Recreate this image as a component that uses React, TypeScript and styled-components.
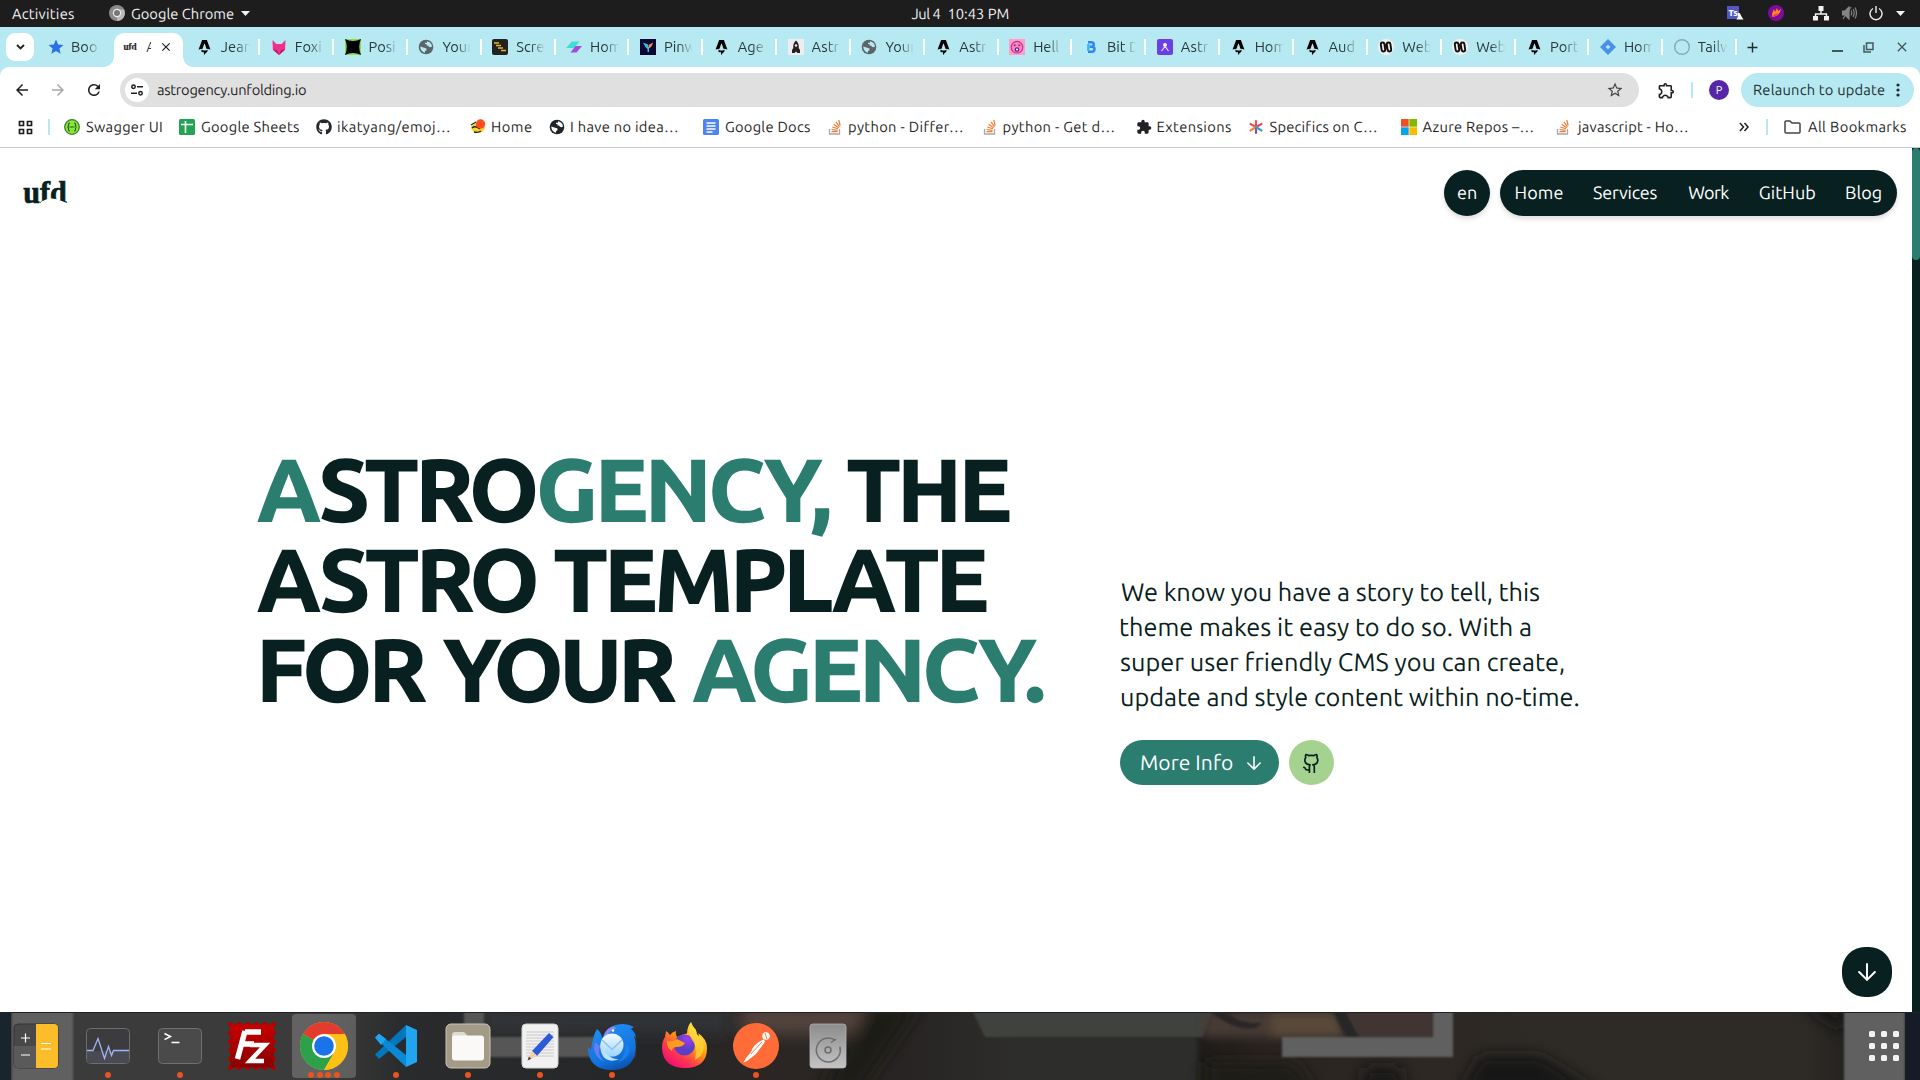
import React, { useLayoutEffect, useRef, useState } from 'react';
import styled, { createGlobalStyle, css } from 'styled-components';
import { MdExtension, MdOutlineExtension, MdStar, MdStarBorder, MdArrowBack, MdArrowForward, MdRefresh, MdClose, MdAdd } from 'react-icons/md';
import { FaGithub } from 'react-icons/fa';
import { SiAstro } from 'react-icons/si';

const ink = '#082120';
const green = '#2a7d6f';
const aqua = '#b6e9f1';

const Global = createGlobalStyle`
  * { box-sizing: border-box; }
  body { margin: 0; background: #fff; overflow: hidden; }
  body, button { font-family: Ubuntu, "Noto Sans", "Open Sans", sans-serif; font-weight: 450; }
  svg { display: block; flex: none; }
`;

/* ---------- text with an exact visible width ---------- */
const FitBox = styled.span`
  display: inline-block;
  flex: none;
  white-space: pre;
  text-rendering: geometricPrecision;
`;

function Fit({ w, children }: { w: number; children: string }) {
  const ref = useRef<HTMLSpanElement>(null);
  const [fit, setFit] = useState({ spacing: 0, indent: 0 });
  useLayoutEffect(() => {
    const el = ref.current;
    const ctx = document.createElement('canvas').getContext('2d');
    if (!el || !ctx) return;
    const cs = getComputedStyle(el);
    ctx.font = `${cs.fontWeight} ${cs.fontSize} ${cs.fontFamily}`;
    const m = ctx.measureText(children);
    const visible = m.actualBoundingBoxLeft + m.actualBoundingBoxRight;
    setFit({
      spacing: children.length > 1 ? (w - visible) / (children.length - 1) : 0,
      indent: m.actualBoundingBoxLeft,
    });
  }, [w, children]);
  return (
    <FitBox ref={ref} style={{ width: w, letterSpacing: fit.spacing, textIndent: fit.indent }}>
      {children}
    </FitBox>
  );
}

/* ---------- layout ---------- */
const Screen = styled.div`
  width: 1920px;
  height: 1080px;
  display: flex;
  flex-direction: column;
  overflow: hidden;
  background: #fff;
`;

const TopBar = styled.header`
  height: 27px;
  flex: none;
  background: #1d1d1d;
  color: #f2f2f2;
  font-size: 14.67px;
  display: grid;
  grid-template-columns: 1fr auto 1fr;
  align-items: center;
  line-height: 25px;
  padding: 0 15px 1px 12px;
`;
const TopGroup = styled.div<{ $end?: boolean }>`
  display: flex;
  align-items: center;
  justify-content: ${p => (p.$end ? 'flex-end' : 'flex-start')};
`;
const Gap = styled.span<{ $w: number }>`
  width: ${p => p.$w}px;
  flex: none;
`;
const Clock = styled.div`
  display: flex;
  gap: 8px;
  padding-left: 3px;
`;

const TabStrip = styled.nav`
  height: 40px;
  flex: none;
  background: ${aqua};
  display: flex;
  align-items: center;
  padding-left: 6px;
  color: #26383b;
  font-size: 14.67px;
`;
const SearchTabs = styled.button`
  width: 28px;
  height: 28px;
  border: 0;
  padding: 0;
  border-radius: 9px;
  background: #fff;
  display: grid;
  place-items: center;
  margin: 0 3px 0 0;
`;
const Tab = styled.div<{ $line?: boolean }>`
  width: 73.85px;
  height: 40px;
  flex: none;
  display: flex;
  align-items: center;
  gap: 8px;
  padding-left: 10px;
  background: ${p => (p.$line ? 'linear-gradient(#fff,#fff) right 0.500px top 12px / 2px 16px no-repeat' : 'none')};
`;
const TabIcon = styled.span`
  width: 16px;
  flex: none;
  display: grid;
  place-items: center;
`;
const TabTitle = styled.span`
  width: 29px;
  overflow: hidden;
  white-space: nowrap;
  line-height: 20px;
  -webkit-mask-image: linear-gradient(to right, #000 50%, transparent 100%);
  mask-image: linear-gradient(to right, #000 50%, transparent 100%);
`;
const ActiveTab = styled.div`
  width: 69px;
  height: 34px;
  margin: 6px 4px 0 3px;
  flex: none;
  align-self: flex-end;
  background: #fff;
  border-radius: 10px 10px 0 0;
  display: flex;
  align-items: center;
  padding: 0 10px 6px 9px;
  justify-content: space-between;
  position: relative;
  &::before, &::after {
    content: '';
    position: absolute;
    bottom: 0;
    width: 10px;
    height: 10px;
  }
  &::before { left: -10px; background: radial-gradient(circle at 0 0, transparent 9.5px, #fff 10px); }
  &::after { right: -10px; background: radial-gradient(circle at 100% 0, transparent 9.5px, #fff 10px); }
`;
const ActiveTitle = styled.span`
  width: 5px;
  margin-left: 2px;
  overflow: hidden;
  font-size: 14px;
  line-height: 20px;
  color: #333;
`;
const WindowButtons = styled.div`
  margin-left: auto;
  display: flex;
  align-items: center;
  gap: 20px;
  padding-right: 10px;
`;

const ToolbarBack = styled.div`
  flex: none;
  background: ${aqua};
`;
const Toolbar = styled.div`
  height: 46px;
  background: #fff;
  border-radius: 9px 9px 0 0;
  display: flex;
  align-items: center;
  padding: 0 6px 0 13px;
  font-size: 14.67px;
  line-height: 20px;
  color: #1f1f1f;
`;
const NavIcons = styled.div`
  display: flex;
  gap: 18px;
  width: 107px;
`;
const Omnibox = styled.div`
  width: 1519px;
  height: 34px;
  border-radius: 17px;
  background: #e0e0e0;
  display: flex;
  align-items: center;
  padding: 0 15px 0 5px;
`;
const SiteButton = styled.span`
  width: 24px;
  height: 24px;
  border-radius: 50%;
  background: #fff;
  display: grid;
  place-items: center;
  margin-right: 8px;
`;
const Divider = styled.span<{ $m: string }>`
  width: 2px;
  height: 16px;
  flex: none;
  background: ${aqua};
  margin: ${p => p.$m};
`;
const Avatar = styled.span`
  width: 20px;
  height: 20px;
  border-radius: 50%;
  background: #5427a8;
  color: #fff;
  font-size: 11px;
  line-height: 20px;
  text-align: center;
`;
const Relaunch = styled.button`
  width: 173px;
  height: 34px;
  margin-left: 12px;
  border: 0;
  border-radius: 17px;
  background: ${aqua};
  color: #1f2d30;
  font-size: 14.67px;
  line-height: 20px;
  padding: 0 0 0 13px;
  display: flex;
  align-items: center;
  gap: 11px;
`;

const Bookmarks = styled.div`
  height: 35px;
  flex: none;
  border-bottom: 1px solid #c9c9c9;
  display: flex;
  align-items: center;
  padding: 0 14px 6px 18px;
  font-size: 14.67px;
  line-height: 20px;
  color: #1f1f1f;
`;
const Bookmark = styled.div<{ $w: number }>`
  width: ${p => p.$w + 39}px;
  flex: none;
  display: flex;
  align-items: center;
  gap: 6px;
`;

const Page = styled.main`
  height: 864px;
  flex: none;
  display: flex;
  color: ${ink};
`;
const PageBody = styled.div`
  width: 1912px;
  display: flex;
  flex-direction: column;
`;
const ScrollTrack = styled.div`
  width: 8px;
  background: ${ink};
`;
const ScrollThumb = styled.div`
  height: 112px;
  border-radius: 4px;
  background: ${green};
`;
const SiteHeader = styled.header`
  display: flex;
  align-items: center;
  padding: 22px 15px 0 22px;
  font-size: 18px;
  line-height: 46px;
`;
const pill = css`
  height: 46px;
  border-radius: 23px;
  background: ${ink};
  color: #fff;
  box-shadow: 0 3px 5px rgba(40, 10, 30, 0.14);
`;
const Lang = styled.button`
  ${pill}
  width: 46px;
  border: 0;
  padding: 0 1px 1px 0;
  margin: 0 10px 0 auto;
  font-size: 18px;
`;
const Menu = styled.nav`
  ${pill}
  width: 397px;
  display: flex;
  gap: 30.6px;
  padding-left: 15.5px;
`;
const Hero = styled.section`
  display: grid;
  grid-template-columns: 864px 1fr;
  padding: 229px 0 0 256px;
`;
const Title = styled.h1`
  margin: 0;
  font-size: 90px;
  font-weight: 800;
  line-height: 90px;
`;
const TitleLine = styled.div`
  height: 90px;
  display: flex;
`;
const Word = styled.span<{ $green?: boolean; $ml?: number }>`
  color: ${p => (p.$green ? green : ink)};
  margin-left: ${p => p.$ml ?? 0}px;
  display: flex;
`;
const Side = styled.div`
  padding-top: 129px;
`;
const Lead = styled.p`
  margin: 0 0 26px 1px;
  display: flex;
  flex-direction: column;
  font-size: 25.3px;
  line-height: 35px;
`;
const Actions = styled.div`
  display: flex;
  gap: 10px;
`;
const MoreInfo = styled.a`
  width: 159px;
  height: 45px;
  border-radius: 23px;
  background: ${green};
  color: #fff;
  display: flex;
  align-items: center;
  gap: 14px;
  padding-left: 21px;
  font-size: 21px;
  line-height: 43px;
`;
const RoundLink = styled.a`
  width: 45px;
  height: 45px;
  border-radius: 50%;
  background: #a5d28f;
  display: grid;
  place-items: center;
`;
const ScrollDown = styled.button`
  width: 50px;
  height: 50px;
  border: 0;
  padding: 0;
  border-radius: 23px;
  background: ${ink};
  display: grid;
  place-items: center;
  margin: auto 20px 15px auto;
`;

const Dock = styled.footer`
  height: 68px;
  flex: none;
  position: relative;
  background: #2b2a28;
  display: flex;
  overflow: hidden;
`;
const Wallpaper = styled.svg`
  position: absolute;
  inset: 0;
`;
const DockItems = styled.div`
  position: relative;
  display: flex;
  flex: 1;
  padding: 2px 9px 2px 4px;
`;
const DockItem = styled.div<{ $active?: boolean }>`
  width: 64px;
  height: 64px;
  margin-right: 8px;
  border-radius: 4px;
  background: ${p => (p.$active ? 'rgba(255,255,255,0.2)' : 'transparent')};
  display: flex;
  flex-direction: column;
  align-items: center;
  padding-top: 8px;
`;
const Dots = styled.div`
  display: flex;
  gap: 2.7px;
  margin-top: 2px;
`;
const Dot = styled.span`
  width: 6px;
  height: 6px;
  border-radius: 50%;
  background: #e95420;
`;
const AppGrid = styled.div`
  margin: 17px 12px 0 auto;
  display: grid;
  grid-template-columns: repeat(3, 6px);
  grid-auto-rows: 6px;
  gap: 6px;
`;
const Cell = styled.span`
  background: #f3f3f3;
  border-radius: 1.5px;
`;

/* ---------- small drawings ---------- */
const Caret = () => <svg width="9" height="5" viewBox="0 0 9 5"><path d="M0 0h9L4.500 5z" fill="#f2f2f2" /></svg>;

const ChromeMono = () => (
  <svg width="16" height="16" viewBox="0 0 16 16">
    <circle cx="8" cy="8" r="8" fill="#8b8b8b" />
    <path d="M8 16A8 8 0 0 0 15 4.500H8z" fill="#b9b9b9" />
    <circle cx="8" cy="8" r="3.600" fill="#777" stroke="#eee" strokeWidth="1.200" />
  </svg>
);

const Logo = ({ w, h, fill = ink }: { w: number; h: number; fill?: string }) => (
  <svg width={w} height={h} viewBox="0 0 46 26">
    <text x="1.300" y="22.500" fontFamily="Liberation Serif, serif" fontWeight="700" fontSize="31" fill={fill} stroke={fill} strokeWidth="0.700" textLength="43.500" lengthAdjust="spacingAndGlyphs">ufd</text>
    <path d="M18 25L19.500 21.500Q27 17 34 19Q40 21 45 23V26H17z" fill="#fff" />
  </svg>
);

const Doc = ({ c, kind }: { c: string; kind: string }) => (
  <svg width="16" height="16" viewBox="0 0 16 16">
    <rect width="16" height="16" rx="1.500" fill={c} />
    {kind === 'sheet'
      ? <path d="M2 5.500h12M6.500 2v12" stroke="#fff" strokeWidth="1.600" />
      : <path d="M3.500 4h9M3.500 7h9M3.500 10h9M3.500 13h6" stroke="#fff" strokeWidth="1.500" />}
  </svg>
);

const Stack = () => (
  <svg width="16" height="16" viewBox="0 0 16 16" fill="none">
    <path d="M2.500 10v5h10v-5" stroke="#a5a7aa" strokeWidth="1.300" />
    <path d="M4.500 12.700h6M4.600 10.500l6 .8M5.300 8l5.700 1.800M6.600 5.300l5 3.400M9 2.800l3.400 4.800M11.800 1l1.400 5.600" stroke="#f07a35" strokeWidth="1.200" />
  </svg>
);

const Swagger = () => (
  <svg width="16" height="16" viewBox="0 0 16 16" fill="none">
    <circle cx="8" cy="8" r="7.300" fill="#85ea2d" stroke="#3b7a3e" strokeWidth="1.300" />
    <path d="M6 4q-1.500 0-1.500 1.500v1Q4.500 8 3.300 8q1.200 0 1.200 1.500v1Q4.500 12 6 12M10 4q1.500 0 1.500 1.500v1Q11.500 8 12.700 8q-1.200 0-1.200 1.500v1Q11.500 12 10 12M5.500 8h5" stroke="#24533c" strokeWidth="1.100" />
  </svg>
);

const Face = () => (
  <svg width="16" height="16" viewBox="0 0 16 16" fill="none">
    <path d="M1 8a7 6 0 0 0 14 0l-5-5-6 2z" fill="#f5d327" />
    <path d="M1 6l5-3M2 9q3-3 8 1M4 13q4 1 7-1" stroke="#222" strokeWidth="1.300" />
    <circle cx="10.500" cy="5" r="4.700" fill="#ff4b1f" />
  </svg>
);

const Asterisk = () => (
  <svg width="16" height="16" viewBox="0 0 16 16" strokeWidth="2.200" strokeLinecap="round">
    <path d="M8 8V2M8 8L2.500 5" stroke="#f0534f" /><path d="M8 8L2.500 11.500" stroke="#f58a3c" />
    <path d="M8 8v6" stroke="#7b4fc0" /><path d="M8 8l5.500-3" stroke="#e2486c" /><path d="M8 8l5.500 3.500" stroke="#38a6b8" />
  </svg>
);

const Microsoft = () => (
  <svg width="16" height="16" viewBox="0 0 16 16">
    <path d="M0 0h7.700v7.700H0z" fill="#f25022" /><path d="M8.300 0H16v7.700H8.300z" fill="#7fba00" />
    <path d="M0 8.300h7.700V16H0z" fill="#00a4ef" /><path d="M8.300 8.300H16V16H8.300z" fill="#ffb900" />
  </svg>
);

const World = ({ c, land }: { c: string; land: string }) => (
  <svg width="16" height="16" viewBox="0 0 16 16">
    <circle cx="8" cy="8" r="7.300" fill={c} />
    <path d="M9 2.200q4.500 1 5 5.300-1.500 1.300-3 .3L10 6.500H8.500V5H7V3.800h2z" fill={land} />
    <path d="M2.200 7.500l4 1.200 2.300.8v1.600L7 12.200v1.600Q2.500 12.500 2.200 7.500z" fill={land} />
  </svg>
);

const Fox = () => <svg width="16" height="16" viewBox="0 0 16 16"><path d="M1.500 1l3.800 4h5.400l3.800-4-.4 10L8 16l-6.100-5z" fill="#f0318b" /><path d="M2 10l4 1.500L8 16zM14 10l-4 1.500L8 16z" fill="#b5125f" /></svg>;
const Posi = () => <svg width="16" height="16" viewBox="0 0 16 16"><rect width="16" height="16" fill="#8be04e" /><path d="M0 0q8 4 16 0-3.500 8 0 16-8-4-16 0 3.500-8 0-16z" fill="#000" /></svg>;
const Scre = () => <svg width="16" height="16" viewBox="0 0 16 16"><rect width="16" height="16" rx="2" fill="#222" /><path d="M2 4h5M4 6.500h5M6 9h5M9 11.500h5" stroke="#e5b62c" strokeWidth="1.500" /></svg>;
const Slash = () => <svg width="16" height="16" viewBox="0 0 16 16"><path d="M6 2.500h7.500l-5.500 6.500H0z" fill="#3ce0cf" /><path d="M9.500 7H16l-5.500 6.500H4.500z" fill="#a24be0" /></svg>;
const Pinw = () => <svg width="16" height="16" viewBox="0 0 16 16"><rect width="16" height="16" fill="#0b0733" /><path d="M3 3.500l5 2v5q-3-2-5-7z" fill="#2ec4d6" /><path d="M13 3.500q-1 5-4.500 6V6z" fill="#f08a4b" /><path d="M8.300 8v5" stroke="#48b8e0" strokeWidth="1.500" /></svg>;
const Rocket = () => <svg width="16" height="16" viewBox="0 0 16 16"><rect width="16" height="16" fill="#eee" /><path d="M8 1.500q3.200 2.500 2.700 7.500l1.300 2v3H9.500L8 12.500 6.500 14H4v-3l1.300-2Q4.800 4 8 1.500z" fill="#222" /><circle cx="8" cy="6.500" r="1.200" fill="#eee" /></svg>;
const Pink = () => <svg width="16" height="16" viewBox="0 0 16 16" fill="none"><rect width="16" height="16" fill="#ff9dcc" /><circle cx="8" cy="8.200" r="5.800" fill="#fb86c0" stroke="#c2348f" strokeWidth="1.200" /><circle cx="5.700" cy="6.300" r="1" fill="#a3207c" /><circle cx="10.300" cy="6.300" r="1" fill="#a3207c" /><circle cx="8" cy="10.500" r="1.700" fill="#fff" stroke="#6c1aa0" strokeWidth="1.300" /></svg>;
const Bit = () => <svg width="16" height="16" viewBox="0 0 16 16" fill="none"><path d="M5 3.200H8.500a2.200 2.200 0 0 1 0 4.500H6.500M5 12.800h4a2.500 2.500 0 0 0 0-5" stroke="#2f86f6" strokeWidth="2.500" /><path d="M5.300 5v7" stroke="#34b7ff" strokeWidth="2.400" /></svg>;
const Purple = () => <svg width="16" height="16" viewBox="0 0 16 16" fill="none"><rect width="16" height="16" rx="2" fill="#6a3fe6" /><circle cx="8" cy="6" r="1.900" fill="#fff" /><path d="M4.500 12l2.700-3.500h1.600L11.500 12" stroke="#e8e2ff" strokeWidth="1.200" /></svg>;
const Web = () => <svg width="16" height="16" viewBox="0 0 16 16" fill="none"><circle cx="8" cy="8" r="8" fill="#f5f0ee" /><rect x="3.200" y="3.500" width="3.600" height="9" rx="1.800" stroke="#111" strokeWidth="1.900" transform="rotate(-8 5 8)" /><rect x="9.200" y="3.500" width="3.600" height="9" rx="1.800" stroke="#111" strokeWidth="1.900" transform="rotate(-8 11 8)" /><path d="M6.500 4.500l3.500 7" stroke="#111" strokeWidth="1.500" /></svg>;
const Diamond = () => <svg width="16" height="16" viewBox="0 0 16 16"><path d="M8 0l4 4-4 4-4-4zM8 8l4 4-4 4-4-4zM0 8l4-4 4 4-4 4zM8 8l4-4 4 4-4 4z" fill="#4a90e8" /><path d="M8 5.700L10.300 8 8 10.300 5.700 8z" fill="#bfe6f8" /></svg>;
const Ring = () => <svg width="16" height="16" viewBox="0 0 16 16" fill="none"><circle cx="8" cy="8" r="7.300" stroke="#8aa9b2" strokeWidth="1.400" /></svg>;
const Astro = () => <SiAstro size={15} color="#000" />;
const Globe = () => <World c="#5c6468" land={aqua} />;

const tabs: [string, () => React.ReactElement][] = [
  ['Foxi', Fox], ['Posi', Posi], ['Your', Globe], ['Scre', Scre], ['Hom', Slash], ['Pinw', Pinw], ['Age', Astro],
  ['Astr', Rocket], ['Your', Globe], ['Astr', Astro], ['Hell', Pink], ['Bit D', Bit], ['Astr', Purple], ['Hom', Astro],
  ['Aud', Astro], ['Web', Web], ['Web', Web], ['Port', Astro], ['Hom', Diamond], ['Tailw', Ring],
];

const bookmarks: { icon: React.ReactElement; label: string; text: number; w: number }[] = [
  { icon: <Swagger />, label: 'Swagger UI', text: 76, w: 76 },
  { icon: <Doc c="#23a455" kind="sheet" />, label: 'Google Sheets', text: 98, w: 98 },
  { icon: <FaGithub size={16} color="#24292f" />, label: 'ikatyang/emoj…', text: 112, w: 115 },
  { icon: <Face />, label: 'Home', text: 40, w: 40 },
  { icon: <World c="#1f2328" land="#fff" />, label: 'I have no idea…', text: 107, w: 115 },
  { icon: <Doc c="#4c84f0" kind="doc" />, label: 'Google Docs', text: 85, w: 85 },
  { icon: <Stack />, label: 'python - Differ…', text: 114, w: 115.5 },
  { icon: <Stack />, label: 'python - Get d…', text: 111, w: 115 },
  { icon: <MdExtension size={16} color="#202124" />, label: 'Extensions', text: 73.5, w: 73 },
  { icon: <Asterisk />, label: 'Specifics on C…', text: 107, w: 114 },
  { icon: <Microsoft />, label: 'Azure Repos –…', text: 111, w: 115.5 },
  { icon: <Stack />, label: 'javascript - Ho…', text: 111, w: 114 },
];

const ArrowDown = ({ s, sw }: { s: number; sw: number }) => (
  <svg width={s} height={s} viewBox="0 0 16 16" fill="none" stroke="#fff" strokeWidth={sw} strokeLinecap="round" strokeLinejoin="round">
    <path d="M8 1v14M1 8l7 7 7-7" />
  </svg>
);

const Cat = () => (
  <svg width="18" height="20" viewBox="2 0 18 20" fill="none" stroke={ink} strokeWidth="1.700" strokeLinecap="round" strokeLinejoin="round">
    <path d="M7.600 19v-5.500q0-1.300.7-2Q3 11.200 3 6.800q0-1.300.9-2.400-.5-1.700.2-3.200 1.500 0 2.900 1.200 2.500-.6 5 0Q13.400 1.200 14.900 1.200q.7 1.500.2 3.200.9 1.100.9 2.400 0 4.400-5 4.700" transform="translate(.8 .3)" />
    <path d="M13.300 19.300v-5.500q0-1.300-.8-2M8.300 16.800Q5.300 17.500 4.500 15.800 3.900 14.300 2.800 14.300" />
  </svg>
);

/* ---------- dock icons, 48px squares ---------- */
const I = ({ children }: { children: React.ReactNode }) => <svg width="48" height="48" viewBox="0 0 48 48" fill="none">{children}</svg>;

const Calculator = () => (
  <I><rect x="2" y="2" width="44" height="44" rx="4" fill="#484848" stroke="#343434" /><path d="M2 24h22v22H6q-4 0-4-4z" fill="#5a5a5a" />
    <path d="M24 2h18q4 0 4 4v36q0 4-4 4H24z" fill="#fcbd2b" />
    <path d="M9 16h9M13.500 11.500v9M9 33h9M29 21.500h10M29 27h10" stroke="#fff" strokeWidth="1.200" /></I>
);
const Monitor = () => (
  <I><rect x="2.500" y="6.500" width="43" height="35" rx="4" fill="#3c3c3e" stroke="#6d6d6d" /><path d="M3 29h42v9q0 3-3 3H6q-3 0-3-3z" fill="#494b54" />
    <path d="M3 28.500h6l5-12 6.500 20 4-12 3 9 2-5H45" stroke="#a3b4f4" strokeWidth="1.300" /></I>
);
const Terminal = () => (
  <I><rect x="2.500" y="6.500" width="43" height="35" rx="4" fill="#4a4a4a" stroke="#707070" />
    <path d="M8.500 11.500l6 3-6 3.200M15.500 20.500h8" stroke="#fff" strokeWidth="1.500" /></I>
);
const Filezilla = () => (
  <I><defs><linearGradient id="fz" x2="0" y2="1"><stop stopColor="#c80000" /><stop offset="1" stopColor="#8a0000" /></linearGradient></defs>
    <rect x="2.500" y="2.500" width="43" height="43" stroke="#b00000" strokeWidth="5" strokeDasharray="0 8.600" strokeLinecap="round" />
    <rect x="2.500" y="2.500" width="43" height="43" fill="url(#fz)" />
    <path d="M17 10h16M17 9L9.500 37M15 22h11" stroke="#fff" strokeWidth="5.500" />
    <path d="M22 23h15L22 39h14" stroke="#fff" strokeWidth="4.500" /></I>
);
const Chrome = () => (
  <I><circle cx="24" cy="24" r="24" fill="#fbbc04" />
    <path d="M24 24L3.220 12A24 24 0 0 1 44.780 12z" fill="#e33b2e" />
    <path d="M24 24L3.220 12A24 24 0 0 0 24 48l10.400-18z" fill="#2da04a" />
    <path d="M24 12h20.780A24 24 0 0 1 24 48l10.400-18z" fill="#fdc014" />
    <circle cx="24" cy="24" r="12" fill="#fff" /><circle cx="24" cy="24" r="9.800" fill="#1a73e8" /></I>
);
const Code = () => (
  <I><path d="M34 3v12L7 37l-4-4.500z" fill="#0277bd" /><path d="M3 15.500l4-3.800L34 33v12z" fill="#0a8ad6" />
    <path d="M3 15.500l4-3.800L14 17l-5 6zM34 3l11 5v32l-11 5z" fill="#22a5f1" /></I>
);
const Files = () => (
  <I><rect x="2" y="2" width="44" height="44" rx="5" fill="#a39b88" stroke="#cbc4b3" /><path d="M8 13q0-3 3-3h9l4 4v5H8z" fill="#dedad0" />
    <rect x="8" y="13.500" width="32" height="25" rx="3" fill="#faf9f7" /></I>
);
const Editor = () => (
  <I><rect x="6" y="2" width="36" height="44" rx="4" fill="#f1f1f1" stroke="#cfcfcf" />
    <path d="M10 10h28M10 13h28M10 16h28M10 19h28M10 22h28M10 25h28M10 28h28M10 31h28M10 34h28" stroke="#c6c6c6" strokeWidth=".9" />
    <path d="M16 29L33 11l4.500 4L21 34z" fill="#2b5bd8" /><path d="M16 29l5 5-9.500 4.500z" fill="#f6cfa3" /><path d="M13 34.500l2.300 2.300-3.800 1.700z" fill="#444" /></I>
);
const Thunderbird = () => (
  <I><defs>
    <linearGradient id="tb" x1=".3" x2=".7" y2="1"><stop stopColor="#1f8ef5" /><stop offset=".7" stopColor="#1273de" /><stop offset="1" stopColor="#0b4fa8" /></linearGradient>
    <linearGradient id="tm" x2="0" y2="1"><stop stopColor="#f4faff" /><stop offset="1" stopColor="#9bd4fb" /></linearGradient></defs>
    <path d="M9 7q5 4 5 10Q18 4 30 2.500q9-1.500 16 2.500l-3 2q4 3 5 8l-2-1q3 9 1 17-3 17-23 17Q0 48 0 25l3 3Q5 13 9 7z" fill="url(#tb)" />
    <path d="M15.500 14q3-9 11-9.500l1.500 2q-6 2-9 7z" fill="#8b8cf4" />
    <path d="M7 20q-4 12 8 19-6-7-3-15z" fill="#6a7cf0" />
    <circle cx="24" cy="23" r="11.500" fill="url(#tm)" />
    <path d="M12 21.500q6 15 19 16-10 3-15-2-4-5-4-14z" fill="#b9e2fd" />
    <path d="M14 18l10 9.500L34 18" stroke="#8fbfe8" strokeWidth="1.500" strokeLinejoin="round" />
    <path d="M37 22q2 11-7 18 13-4 11-16z" fill="#1a7fea" />
    <circle cx="25" cy="8.500" r="1.200" fill="#fff" /></I>
);
const Firefox = () => (
  <I><defs>
    <linearGradient id="ff" x1=".85" y1=".1" x2=".2" y2="1"><stop stopColor="#fff44f" /><stop offset=".4" stopColor="#ff980e" /><stop offset=".7" stopColor="#ff3750" /><stop offset="1" stopColor="#eb0878" /></linearGradient>
    <radialGradient id="fp" cx=".65" cy=".2"><stop stopColor="#a03cf0" /><stop offset="1" stopColor="#5a3fc4" /></radialGradient></defs>
    <path d="M6 9q2 1 4 4 2-3 6-4-1 3 1 6 6-3 10-3.500Q27 5 31 0q1 4 5 8v3l3 4q0-2-1-4 9 6 9 15 0 20-22 20T2 26q0-7 3-11z" fill="url(#ff)" />
    <circle cx="24.500" cy="23" r="10.500" fill="url(#fp)" />
    <path d="M7 19q6 1 10-2 4 2 8 4-2 4-8 4-5 0-5 4-6-4-5-10z" fill="#ff9a1e" />
    <path d="M31 1q3 5 6 9v2q9 8 6 18-3 6-8 8 2-10-1-17-5-7-5-11z" fill="#ffd83a" opacity=".75" /></I>
);
const Postman = () => (
  <I><circle cx="24" cy="24" r="23" fill="#ff6c37" /><circle cx="34" cy="14" r="3.800" fill="#fff" />
    <path d="M31.500 17.500q2 1 1 3L24 32l-9 7-3.500 1.500L14 36l5-6q2-8 12.500-12.500z" fill="#fff" />
    <path d="M30 20L19 32M33 11l2 6" stroke="#ff6c37" strokeWidth=".9" /></I>
);
const Disk = () => (
  <I><defs><linearGradient id="dk" x2="0" y2="1"><stop stopColor="#8c8c8c" /><stop offset="1" stopColor="#c4c4c4" /></linearGradient></defs>
    <rect x="6" y="2" width="36" height="44" rx="3" fill="url(#dk)" stroke="#b4b4b4" strokeWidth=".8" />
    <path d="M31.500 18.300A12 12 0 1 0 36 25M27 20.500l5-3.500M36 24.500v4" stroke="#6e6e6e" strokeWidth="1.500" /><circle cx="24" cy="28" r="3" stroke="#6e6e6e" strokeWidth="1.600" /></I>
);

const dock: [() => React.ReactElement, number][] = [
  [Calculator, 0], [Monitor, 1], [Terminal, 1], [Filezilla, 0], [Chrome, 4], [Code, 1],
  [Files, 1], [Editor, 1], [Thunderbird, 1], [Firefox, 0], [Postman, 1], [Disk, 0],
];

const Backdrop = () => (
  <Wallpaper width="1920" height="68" viewBox="0 0 1920 68" preserveAspectRatio="none">
    <defs>
      <linearGradient id="wall">
        <stop offset="0" stopColor="#3b3b3b" /><stop offset=".17" stopColor="#3b3b3b" /><stop offset=".21" stopColor="#2a2b2c" />
        <stop offset=".34" stopColor="#252627" /><stop offset=".4" stopColor="#2b2624" /><stop offset=".47" stopColor="#272423" /><stop offset=".53" stopColor="#2d2d2b" />
        <stop offset=".622" stopColor="#2d2d2b" /><stop offset=".626" stopColor="#1f1c1a" /><stop offset=".66" stopColor="#2a2421" /><stop offset=".8" stopColor="#2e2a26" /><stop offset=".94" stopColor="#2e2b26" />
        <stop offset=".962" stopColor="#242220" />
      </linearGradient>
      <filter id="soft" x="-30%" y="-60%" width="160%" height="220%"><feGaussianBlur stdDeviation="8" /></filter>
      <filter id="mid" x="-30%" y="-60%" width="160%" height="220%"><feGaussianBlur stdDeviation="4" /></filter>
      <filter id="edge" x="-10%" y="-20%" width="120%" height="140%"><feGaussianBlur stdDeviation="1.200" /></filter>
    </defs>
    <rect width="1920" height="68" fill="url(#wall)" />
    <rect x="480" y="-4" width="250" height="24" fill="#333537" filter="url(#soft)" />
    <g filter="url(#soft)">
      <path d="M740 -6h150l-20 28H740z" fill="#54453e" />
      <path d="M920 -8L860 80h-40L870 -8z" fill="#1f1a18" />
      <path d="M1205 50h90l20 30h-110z" fill="#1d1a18" />
      <path d="M1365 56h35l5 26h-45z" fill="#181818" />
      <path d="M1480 44h60l60 36h-140z" fill="#191918" />
      <path d="M1800 -10h44v30z" fill="#151413" />
    </g>
    <path d="M973 0h240l-10 25H985z" fill="#40423c" filter="url(#edge)" />
    <path d="M1207 0h130l10 25h-145z" fill="#463b34" filter="url(#mid)" />
    <path d="M1270 2h64l8 21h-70z" fill="#584839" filter="url(#mid)" />
    <path d="M1212 0h14q16 14 36 10l-6 6q-22 4-44-16z" fill="#2a2726" filter="url(#edge)" />
    <path d="M1345 0h88v25h-75z" fill="#3f3632" filter="url(#edge)" />
    <path d="M1334 0h11q4 14 14 25h-11q-8-8-14-25z" fill="#262727" filter="url(#edge)" />
    <g filter="url(#edge)" fill="#606060">
      <path d="M12 -4h61v76H12z" />
      <path d="M464 -4h20v29h151v20H464z" fill="#565657" />
      <path d="M1433 -4h20v49h-171V25h151z" />
      <path d="M1844 -4h61v76h-61z" />
    </g>
    <rect width="11" height="68" fill="#1a242c" />
    <rect x="1905" width="15" height="68" fill="#151b27" />
    <rect width="1920" height="1" fill="#202225" />
  </Wallpaper>
);

export default function App() {
  return (
    <Screen>
      <Global />
      <TopBar>
        <TopGroup>
          <Fit w={62}>Activities</Fit><Gap $w={35} /><ChromeMono /><Gap $w={6} />
          <Fit w={103}>Google Chrome</Fit><Gap $w={7} /><Caret />
        </TopGroup>
        <Clock><Fit w={29}>Jul 4</Fit><Fit w={60}>10:43 PM</Fit></Clock>
        <TopGroup $end>
          <svg width="17" height="17" viewBox="0 0 17 17"><rect y="1" width="12" height="13" fill="#5158c4" /><text x="1.500" y="11" fontSize="9" fontWeight="700" fontFamily="Noto Sans" fill="#fff">Ts</text><path d="M10.500 8q2.500-1 3 1.500l1 2 2 3h-7l1.500-3z" fill="#fff" /></svg>
          <Gap $w={24} />
          <svg width="16" height="16" viewBox="0 0 16 16"><circle cx="8" cy="8" r="8" fill="#7e0ba0" /><path d="M4 12q0-5 2-8l1 3 2-4 1 3 3-2q-1 7-9 8z" fill="#ff8a1e" /><path d="M4 12q2-3 6-4-1 3-6 4z" fill="#ff2f3f" /></svg>
          <Gap $w={29} />
          <svg width="16" height="15" viewBox="0 0 16 15" fill="#f2f2f2"><path d="M5.500 0h5v5h-5zM0 10h5v4.500H0zM11 10h5v4.500h-5zM7.300 5h1.400v2.300h5.500V10h-1.400V8.700H3.200V10H1.800V7.300h5.500z" /></svg>
          <Gap $w={13} />
          <svg width="15" height="14" viewBox="0 0 15 14" fill="none" stroke="#858585" strokeWidth="1.200"><path d="M0 5h3l4-4v12L3 9H0z" fill="#858585" /><path d="M9 4.500q1.500 2.500 0 5M11 3q2.500 4 0 8M13 1.500q3 5.500 0 11M1 13L9 1" /></svg>
          <Gap $w={12} />
          <svg width="14" height="15" viewBox="0 0 14 15" fill="none" stroke="#eee" strokeWidth="1.400"><path d="M4 2.500a6 6 0 1 0 6 0M7 0v7" /></svg>
          <Gap $w={13} />
          <Caret />
        </TopGroup>
      </TopBar>

      <TabStrip>
        <SearchTabs><svg width="9" height="6" viewBox="0 0 9 6" fill="none"><path d="M1 1l3.500 3.500L8 1" stroke="#1f1f1f" strokeWidth="1.800" /></svg></SearchTabs>
        <Tab><TabIcon><MdStar size={18} color="#2f6fe4" /></TabIcon><TabTitle>Boo</TabTitle></Tab>
        <ActiveTab><Logo w={14} h={9} fill="#222" /><ActiveTitle>A</ActiveTitle><MdClose size={14} color="#1f1f1f" /></ActiveTab>
        <Tab $line><TabIcon><Astro /></TabIcon><TabTitle>Jean</TabTitle></Tab>
        {tabs.map(([title, Icon], i) => (
          <Tab $line key={i}><TabIcon><Icon /></TabIcon><TabTitle>{title}</TabTitle></Tab>
        ))}
        <Gap $w={6} />
        <MdAdd size={17} color="#1f2d30" />
        <WindowButtons>
          <svg width="11" height="12" viewBox="0 0 11 12"><path d="M0 9h11v2H0z" fill="#46575b" /></svg>
          <svg width="11" height="11" viewBox="0 0 11 11" fill="none" stroke="#46575b" strokeWidth="1.500"><path d="M3.500 1h6.500v6.500H3.500zM1 3v7h7" /></svg>
          <MdClose size={16} color="#46575b" />
        </WindowButtons>
      </TabStrip>

      <ToolbarBack>
        <Toolbar>
          <NavIcons><MdArrowBack size={18} /><MdArrowForward size={18} color="#a8a8a8" /><MdRefresh size={18} /></NavIcons>
          <Omnibox>
            <SiteButton>
              <svg width="12" height="12" viewBox="0 0 12 12" fill="none" stroke="#1f1f1f" strokeWidth="1.500"><circle cx="2.500" cy="2.800" r="1.700" /><path d="M6 2.800h6M0 9.200h6" /><circle cx="9.500" cy="9.200" r="1.700" /></svg>
            </SiteButton>
            <Fit w={149}>astrogency.unfolding.io</Fit>
            <Gap $w={1300} />
            <MdStarBorder size={18} color="#444" />
          </Omnibox>
          <Gap $w={18} />
          <MdOutlineExtension size={19} />
          <Divider $m="0 16px 0 15px" />
          <Avatar>P</Avatar>
          <Relaunch>
            <Fit w={131}>Relaunch to update</Fit>
            <svg width="4" height="14" viewBox="0 0 4 14" fill="#1f2d30"><circle cx="2" cy="2" r="1.600" /><circle cx="2" cy="7" r="1.600" /><circle cx="2" cy="12" r="1.600" /></svg>
          </Relaunch>
        </Toolbar>
      </ToolbarBack>

      <Bookmarks>
        <svg width="15" height="15" viewBox="0 0 15 15" fill="none" stroke="#1f1f1f" strokeWidth="1.700"><path d="M1.500 1.500h4v4h-4zM9.500 1.500h4v4h-4zM1.500 9.500h4v4h-4zM9.500 9.500h4v4h-4z" /></svg>
        <Divider $m="0 14px 0 15px" />
        {bookmarks.map((b, i) => (
          <Bookmark key={i} $w={b.w}>{b.icon}<Fit w={b.text}>{b.label}</Fit></Bookmark>
        ))}
        <Gap $w={31} />
        <svg width="10" height="10" viewBox="0 0 10 10" fill="none" stroke="#1f1f1f" strokeWidth="1.500"><path d="M1 1l3.500 4L1 9M5.500 1L9 5 5.500 9" /></svg>
        <Divider $m="0 16px 0 auto" />
        <svg width="17" height="14" viewBox="0 0 17 14" fill="none" stroke="#444" strokeWidth="1.500"><path d="M1 2q0-1 1-1h4l2 2h7q1 0 1 1v8q0 1-1 1H2q-1 0-1-1z" /></svg>
        <Gap $w={7} />
        <Fit w={98}>All Bookmarks</Fit>
      </Bookmarks>

      <Page>
        <PageBody>
          <SiteHeader>
            <Logo w={46} h={26} />
            <Lang><Fit w={19}>en</Fit></Lang>
            <Menu>
              <Fit w={47}>Home</Fit><Fit w={64.5}>Services</Fit><Fit w={41}>Work</Fit><Fit w={55.5}>GitHub</Fit><Fit w={35}>Blog</Fit>
            </Menu>
          </SiteHeader>
          <Hero>
            <Title>
              <TitleLine>
                <Word $green $ml={0.5}><Fit w={62}>A</Fit></Word>
                <Word $ml={2.5}><Fit w={214.5}>STRO</Fit></Word>
                <Word $green $ml={4}><Fit w={290.5}>GENCY,</Fit></Word>
                <Word $ml={17}><Fit w={163}>THE</Fit></Word>
              </TitleLine>
              <TitleLine>
                <Word $ml={0.5}><Fit w={279.5}>ASTRO</Fit></Word>
                <Word $ml={18}><Fit w={433}>TEMPLATE</Fit></Word>
              </TitleLine>
              <TitleLine>
                <Word $ml={6.5}><Fit w={164.5}>FOR</Fit></Word>
                <Word $ml={15.5}><Fit w={234}>YOUR</Fit></Word>
                <Word $green $ml={15.5}><Fit w={352}>AGENCY.</Fit></Word>
              </TitleLine>
            </Title>
            <Side>
              <Lead>
                <Fit w={418}>We know you have a story to tell, this</Fit>
                <Fit w={410}>theme makes it easy to do so. With a</Fit>
                <Fit w={443}>super user friendly CMS you can create,</Fit>
                <Fit w={457.5}>update and style content within no-time.</Fit>
              </Lead>
              <Actions>
                <MoreInfo><Fit w={92}>More Info</Fit><ArrowDown s={14} sw={1.800} /></MoreInfo>
                <RoundLink><Cat /></RoundLink>
              </Actions>
            </Side>
          </Hero>
          <ScrollDown><ArrowDown s={18} sw={1.800} /></ScrollDown>
        </PageBody>
        <ScrollTrack><ScrollThumb /></ScrollTrack>
      </Page>

      <Dock>
        <Backdrop />
        <DockItems>
          {dock.map(([Icon, n], i) => (
            <DockItem key={i} $active={n === 4}>
              <Icon />
              <Dots>{Array.from({ length: n }, (_, k) => <Dot key={k} />)}</Dots>
            </DockItem>
          ))}
          <AppGrid>{Array.from({ length: 9 }, (_, k) => <Cell key={k} />)}</AppGrid>
        </DockItems>
      </Dock>
    </Screen>
  );
}
